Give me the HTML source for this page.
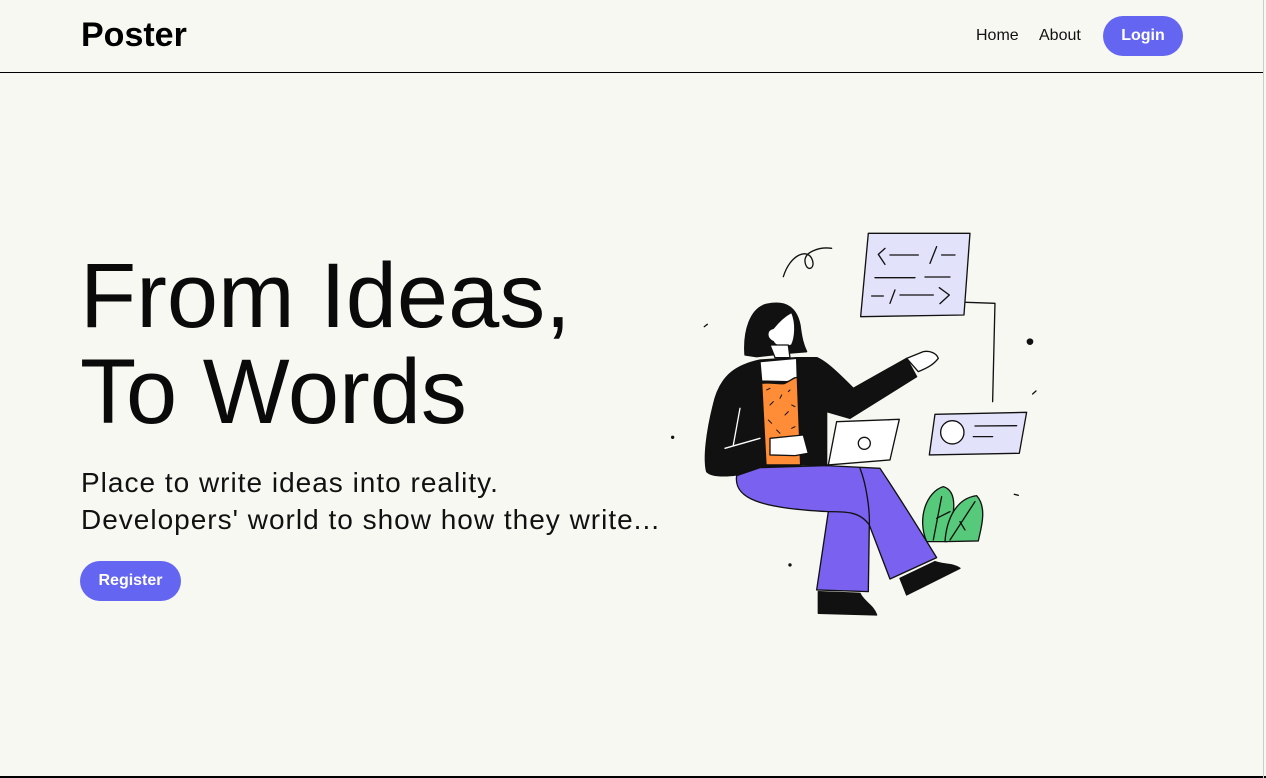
<!DOCTYPE html>
<html><head><meta charset="utf-8"><style>
*{margin:0;padding:0;box-sizing:border-box}
body{width:1266px;height:778px;background:#f8f8f3;font-family:"Liberation Sans",sans-serif;position:relative;overflow:hidden;color:#000}
.hdr{position:absolute;left:0;top:0;width:1264px;height:73px;border-bottom:1.5px solid #000}
.logo{position:absolute;left:81px;top:16px;font-size:34px;font-weight:bold;letter-spacing:0px}
.nav{position:absolute;top:27px;font-size:16px;color:#111}
.btn{position:absolute;background:#6466f1;color:#fff;font-weight:bold;font-size:16px;border-radius:20px;text-align:center;line-height:40px;height:40px}
h1{position:absolute;left:80px;top:248px;font-size:92px;font-weight:normal;line-height:96px;letter-spacing:0px;color:#0a0a0a}
p.sub{position:absolute;left:81px;top:464px;font-size:28px;line-height:37px;color:#111;letter-spacing:1px}
.bot{position:absolute;left:0;top:776px;width:1266px;height:2px;background:#000}
.rs{position:absolute;left:1263px;top:0;width:1px;height:778px;background:#ccc}
</style></head><body>
<div class="hdr"></div>
<div class="logo">Poster</div>
<div class="nav" style="left:976px">Home</div>
<div class="nav" style="left:1039px">About</div>
<div class="btn" style="left:1103px;top:16px;width:80px">Login</div>
<h1>From Ideas,<br>To Words</h1>
<p class="sub">Place to write ideas into reality.<br>Developers' world to show how they write...</p>
<div class="btn" style="left:80px;top:561px;width:101px">Register</div>
<div class="bot"></div><div class="rs"></div>
<svg width="1266" height="778" style="position:absolute;left:0;top:0">
<g transform="translate(660,225) scale(0.3333)" stroke="#111" stroke-width="4" stroke-linecap="round" stroke-linejoin="round">
<path d="M370 155 C390 90 440 70 455 100 C470 130 440 145 435 110 C432 80 480 65 515 70" fill="none"/>
<path d="M625 25 L930 25 L912 270 L602 275 Z" fill="#e3e2fb"/>
<path d="M655 88 L675 70 M655 88 L675 118 M690 90 L775 90 M810 115 L830 65 M845 90 L885 90 M645 158 L765 158 M795 156 L870 156 M635 213 L670 213 M690 235 L705 195 M720 210 L820 210 M838 188 L868 210 L840 236" fill="none"/>
<path d="M918 232 L1005 235 L998 530" fill="none"/>
<path d="M825 568 L1100 562 L1078 685 L808 690 Z" fill="#e3e2fb"/>
<circle cx="877" cy="622" r="35" fill="#fff"/>
<path d="M945 603 L1070 602 M940 635 L998 635" fill="none"/>
<circle cx="1110" cy="350" r="10" fill="#111" stroke="none"/>
<circle cx="38" cy="637" r="5" fill="#111" stroke="none"/>
<circle cx="390" cy="1020" r="5" fill="#111" stroke="none"/>
<path d="M133 305 L142 298 M1118 507 L1128 498 M1063 808 L1075 811" fill="none"/>
<path d="M800 950 C770 880 800 800 850 785 C900 800 880 880 860 950 Z" fill="#57c97a"/>
<path d="M855 950 C860 880 890 820 950 812 C985 850 960 920 955 948 Z" fill="#57c97a"/>
<path d="M820 945 L845 815 M830 880 L870 860 M870 945 L945 830 M900 890 L915 915" fill="none"/>
<path d="M300 405 C230 420 180 450 160 540 C140 620 130 700 140 740 C160 760 230 755 300 735 L430 720 L500 720 L500 560 L570 580 L770 455 L740 400 L580 490 C540 450 500 410 470 398 L410 398 Z" fill="#111"/>
<path d="M300 410 L410 400 L412 465 L380 470 L305 468 Z" fill="#fff"/>
<path d="M305 475 C330 470 360 480 375 475 C395 465 405 455 412 458 L422 720 L318 720 Z" fill="#ff8c36"/>
<path d="M320 495 L330 490 M330 540 L340 530 M360 520 L365 510 M385 500 L390 495 M395 540 L405 545 M375 570 L385 560 M325 585 L335 595 M395 610 L405 605 M350 615 L360 625" fill="none" stroke-width="3"/>
<path d="M255 390 C250 320 270 250 320 238 C380 225 410 250 420 300 C425 340 430 360 440 380 L380 385 L290 395 Z" fill="#111"/>
<path d="M340 310 C360 285 380 270 395 262 C410 295 405 340 395 360 C370 372 345 362 340 350 C318 340 318 315 340 310 Z" fill="#fff"/>
<path d="M330 360 L345 398 L390 398 L385 360 Z" fill="#fff"/>
<path d="M740 400 L790 380 C810 376 830 385 835 400 C820 420 800 430 775 440 Z" fill="#fff"/>
<path d="M240 550 L220 660 M195 670 L300 640" fill="none" stroke="#fff"/>
<path d="M530 590 L718 583 L690 705 L505 720 Z" fill="#fff"/>
<circle cx="613" cy="655" r="18" fill="#fff"/>
<path d="M430 720 L505 720" fill="none"/>
<path d="M330 640 L410 632 L430 630 L445 685 L405 692 L330 690 Z" fill="#fff"/>
<path d="M230 752 C220 820 300 850 505 860 L470 1095 L625 1100 L628 900 L690 1062 L830 998 C770 900 720 820 660 730 L500 722 L300 728 Z" fill="#7b61ef"/>
<path d="M505 860 C560 860 600 860 628 900 M628 900 C630 860 620 780 600 730" fill="none"/>
<path d="M475 1100 L475 1165 L650 1170 C640 1140 610 1130 600 1105 Z" fill="#111"/>
<path d="M720 1060 L740 1110 L780 1090 L900 1030 C880 1015 850 1020 825 1010 Z" fill="#111"/>
</g>
</svg>
</body></html>
